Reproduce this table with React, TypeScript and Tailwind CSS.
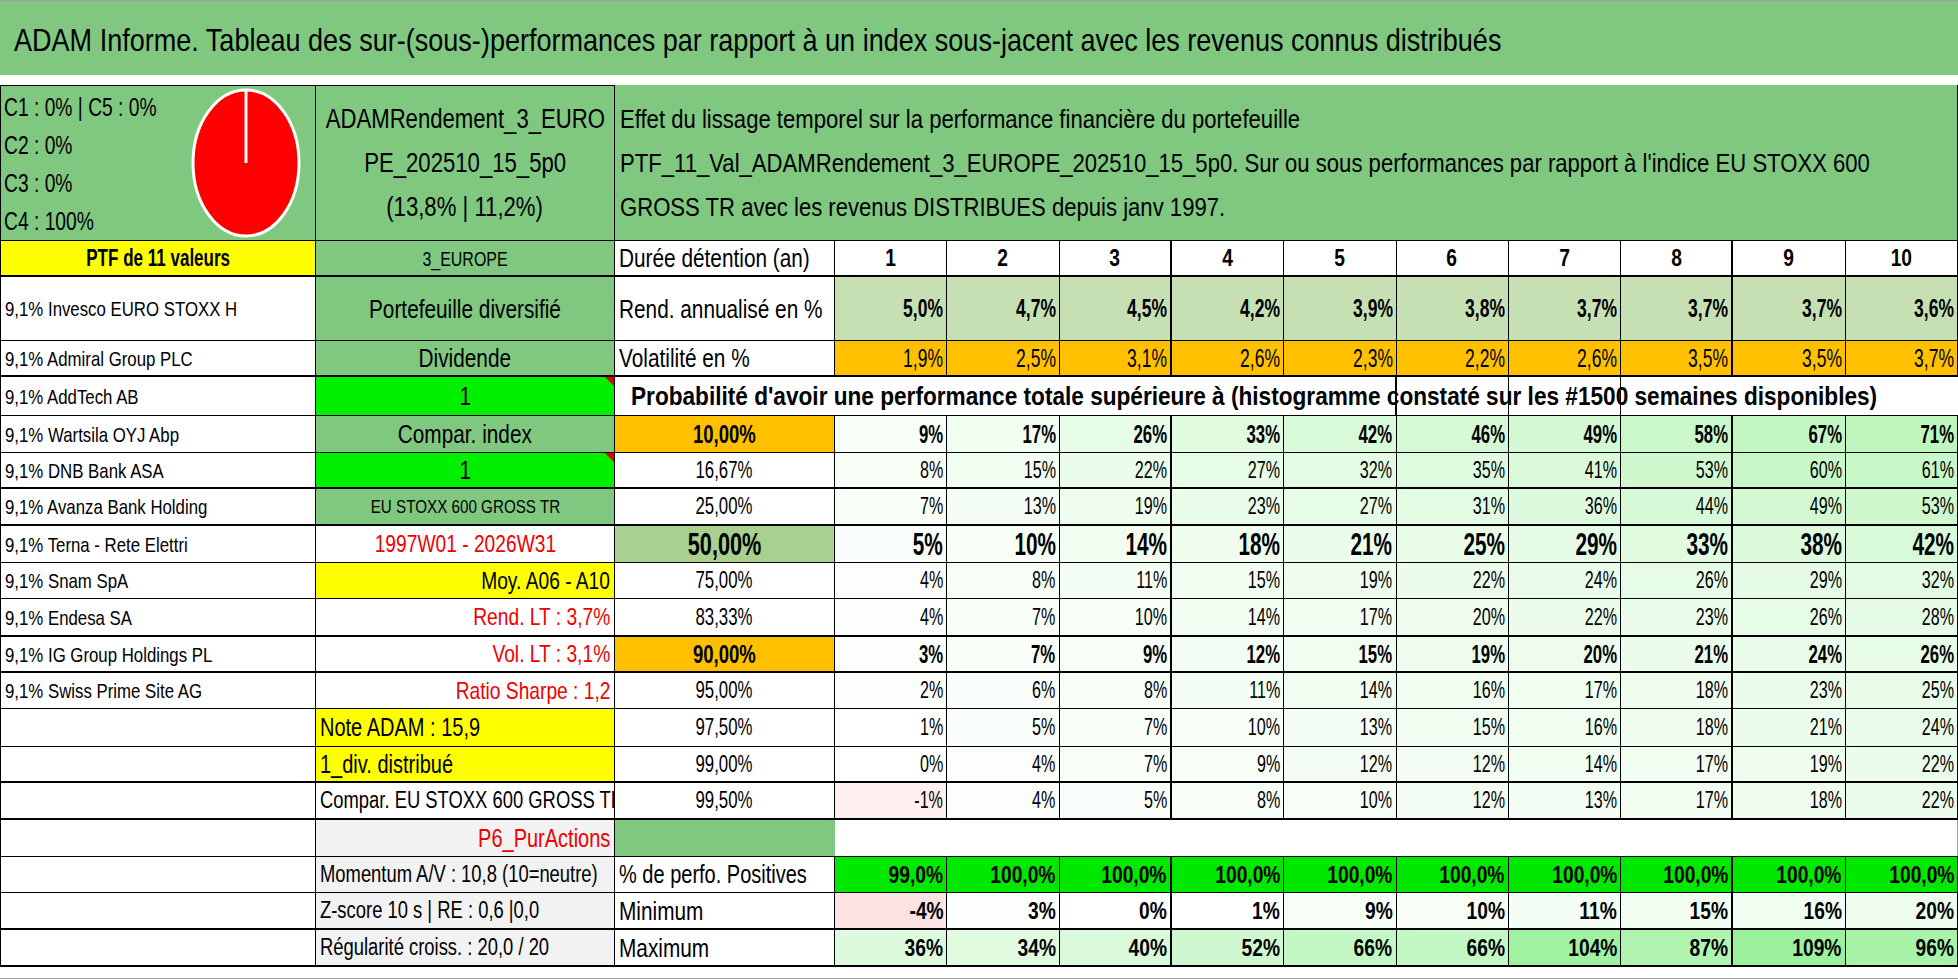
import React from 'react'

const GRID = 'grid grid-cols-[315px_299px_220px_repeat(10,minmax(0,1fr))]'

// the sheet uses a narrow, tall face; Liberation Sans squeezed horizontally stands in for it
function T({ children, o = 'origin-left', s = 'scale-x-[0.8]' }: { children: React.ReactNode; o?: string; s?: string }) {
  return <span className={`inline-block whitespace-nowrap ${s} ${o}`}>{children}</span>
}

// conditional colour scale, white -> light green, pink below zero
function scaleBg(v: number) {
  if (v < 0) return v <= -3 ? '#fde2e2' : '#fff0f0'
  const t = Math.min(v / 110, 1)
  const r = Math.round(255 - t * 100)
  const g = Math.round(255 - t * 14)
  return `rgb(${r},${g},${r})`
}

const rend = ['5,0%', '4,7%', '4,5%', '4,2%', '3,9%', '3,8%', '3,7%', '3,7%', '3,7%', '3,6%']
const vol = ['1,9%', '2,5%', '3,1%', '2,6%', '2,3%', '2,2%', '2,6%', '3,5%', '3,5%', '3,7%']

type Align = 'l' | 'c' | 'r'

type ProbRow = {
  name: string
  b: string
  bCls: string
  bAlign: Align
  p: string
  pCls: string
  pS: string
  vals: number[]
  valCls: string
  valS: string
  h: string
  bottom: string
  tri?: boolean
}

const justify = { l: 'justify-start', c: 'justify-center', r: 'justify-end' }
const origin = { l: 'origin-left', c: 'origin-center', r: 'origin-right' }

const REG = { pCls: 'text-[23px]', pS: 'scale-x-[0.73]', valCls: 'text-[23px]', valS: 'scale-x-[0.7]' }
const BOLD = { pCls: 'bg-[#ffc000] font-bold text-[25px]', pS: 'scale-x-[0.74]', valCls: 'font-bold text-[25px]', valS: 'scale-x-[0.67]' }

const probRows: ProbRow[] = [
  { name: '9,1% Wartsila OYJ Abp', b: 'Compar. index', bCls: 'bg-[#80c880] text-[26px]', bAlign: 'c', p: '10,00%', ...BOLD, vals: [9, 17, 26, 33, 42, 46, 49, 58, 67, 71], h: 'h-[37px]', bottom: 'border-b' },
  { name: '9,1% DNB Bank ASA', b: '1', bCls: 'bg-[#00f000] text-[26px]', bAlign: 'c', tri: true, p: '16,67%', ...REG, vals: [8, 15, 22, 27, 32, 35, 41, 53, 60, 61], h: 'h-[36px]', bottom: 'border-b-2' },
  { name: '9,1% Avanza Bank Holding', b: 'EU STOXX 600 GROSS TR', bCls: 'bg-[#80c880] text-[19px]', bAlign: 'c', p: '25,00%', ...REG, vals: [7, 13, 19, 23, 27, 31, 36, 44, 49, 53], h: 'h-[37px]', bottom: 'border-b-2' },
  { name: '9,1% Terna - Rete Elettri', b: '1997W01 - 2026W31', bCls: 'text-[24px] text-[#f00000]', bAlign: 'c', p: '50,00%', pCls: 'bg-[#a9d08e] font-bold text-[31px]', pS: 'scale-x-[0.7]', vals: [5, 10, 14, 18, 21, 25, 29, 33, 38, 42], valCls: 'font-bold text-[31px]', valS: 'scale-x-[0.67]', h: 'h-[37px]', bottom: 'border-b' },
  { name: '9,1% Snam SpA', b: 'Moy. A06 - A10', bCls: 'bg-[#ffff00] text-[24px]', bAlign: 'r', p: '75,00%', ...REG, vals: [4, 8, 11, 15, 19, 22, 24, 26, 29, 32], h: 'h-[36px]', bottom: 'border-b' },
  { name: '9,1% Endesa SA', b: 'Rend. LT : 3,7%', bCls: 'text-[24px] text-[#f00000]', bAlign: 'r', p: '83,33%', ...REG, vals: [4, 7, 10, 14, 17, 20, 22, 23, 26, 28], h: 'h-[38px]', bottom: 'border-b-2' },
  { name: '9,1% IG Group Holdings PL', b: 'Vol. LT : 3,1%', bCls: 'text-[24px] text-[#f00000]', bAlign: 'r', p: '90,00%', ...BOLD, vals: [3, 7, 9, 12, 15, 19, 20, 21, 24, 26], h: 'h-[36px]', bottom: 'border-b-2' },
  { name: '9,1% Swiss Prime Site AG', b: 'Ratio Sharpe : 1,2', bCls: 'text-[24px] text-[#f00000]', bAlign: 'r', p: '95,00%', ...REG, vals: [2, 6, 8, 11, 14, 16, 17, 18, 23, 25], h: 'h-[36px]', bottom: 'border-b' },
  { name: '', b: 'Note ADAM : 15,9', bCls: 'bg-[#ffff00] text-[25px]', bAlign: 'l', p: '97,50%', ...REG, vals: [1, 5, 7, 10, 13, 15, 16, 18, 21, 24], h: 'h-[38px]', bottom: 'border-b' },
  { name: '', b: '1_div. distribué', bCls: 'bg-[#ffff00] text-[25px]', bAlign: 'l', p: '99,00%', ...REG, vals: [0, 4, 7, 9, 12, 12, 14, 17, 19, 22], h: 'h-[36px]', bottom: 'border-b-2' },
  { name: '', b: 'Compar. EU STOXX 600 GROSS TR', bCls: 'text-[23px]', bAlign: 'l', p: '99,50%', ...REG, vals: [-1, 4, 5, 8, 10, 12, 13, 17, 18, 22], h: 'h-[37px]', bottom: 'border-b-2' },
]

const positives = ['99,0%', '100,0%', '100,0%', '100,0%', '100,0%', '100,0%', '100,0%', '100,0%', '100,0%', '100,0%']
const minimum = [-4, 3, 0, 1, 9, 10, 11, 15, 16, 20]
const maximum = [36, 34, 40, 52, 66, 66, 104, 87, 109, 96]

function colBorder(i: number) {
  return i === 2 || i === 7 ? 'border-r-2' : 'border-r'
}

function Tri() {
  return <span className="absolute top-0 right-0 w-0 h-0 border-t-[9px] border-l-[9px] border-t-[#e00000] border-l-transparent" />
}

function NameCell({ name }: { name: string }) {
  return (
    <div className="flex items-center border-r border-black pl-[4px] text-[21px] overflow-hidden">
      <T>{name}</T>
    </div>
  )
}

export default function App() {
  return (
    <div className="w-[1958px] h-[979px] bg-white text-black overflow-hidden leading-none font-['Liberation_Sans',Arial,sans-serif]">
      {/* title */}
      <div className="h-[75px] bg-[#80c880] border-t border-[#a0a0a0] flex items-center pl-[14px] pt-[3px] text-[32px]">
        <T s="scale-x-[0.845]">ADAM Informe. Tableau des sur-(sous-)performances par rapport à un index sous-jacent avec les revenus connus distribués</T>
      </div>
      <div className="h-[10px]" />

      <div className="border-l border-black">
        {/* header block */}
        <div className={`${GRID} h-[156px] border-b border-black`}>
          <div className="flex items-center bg-[#80c880] border-t border-r border-black">
            <div className="self-start w-[170px] shrink-0 pt-[2px] pl-[3px] text-[26px] leading-[38px]">
              <div><T s="scale-x-[0.74]">C1 : 0% | C5 : 0%</T></div>
              <div><T s="scale-x-[0.74]">C2 : 0%</T></div>
              <div><T s="scale-x-[0.74]">C3 : 0%</T></div>
              <div><T s="scale-x-[0.74]">C4 : 100%</T></div>
            </div>
            <svg className="shrink-0 ml-auto mr-[14px]" width="110" height="150" viewBox="0 0 110 150">
              <ellipse cx="55" cy="75" rx="53" ry="73" fill="#ff0000" stroke="#ffffff" strokeWidth="3" />
              <line x1="55" y1="2" x2="55" y2="75" stroke="#ffffff" strokeWidth="3" />
            </svg>
          </div>
          <div className="flex flex-col items-center justify-center bg-[#80c880] border-t border-r border-black text-[27px] leading-[44px]">
            <T o="origin-center" s="scale-x-[0.82]">ADAMRendement_3_EURO</T>
            <T o="origin-center" s="scale-x-[0.82]">PE_202510_15_5p0</T>
            <T o="origin-center" s="scale-x-[0.82]">(13,8% | 11,2%)</T>
          </div>
          <div className="col-span-11 flex flex-col justify-center bg-[#80c880] border-r border-black pl-[5px] text-[26px] leading-[44px]">
            <div><T s="scale-x-[0.85]">Effet du lissage temporel sur la performance financière du portefeuille</T></div>
            <div><T s="scale-x-[0.85]">PTF_11_Val_ADAMRendement_3_EUROPE_202510_15_5p0. Sur ou sous performances par rapport à l'indice EU STOXX 600</T></div>
            <div><T s="scale-x-[0.85]">GROSS TR avec les revenus DISTRIBUES depuis janv 1997.</T></div>
          </div>
        </div>

        {/* durée */}
        <div className={`${GRID} h-[36px] border-b-2 border-black`}>
          <div className="flex items-center justify-center bg-[#ffff00] border-r border-black font-bold text-[23px]">
            <T o="origin-center" s="scale-x-[0.74]">PTF de 11 valeurs</T>
          </div>
          <div className="flex items-center justify-center bg-[#80c880] border-r border-black text-[21px]">
            <T o="origin-center" s="scale-x-[0.76]">3_EUROPE</T>
          </div>
          <div className="flex items-center border-r border-black pl-[4px] text-[26px]">
            <T>Durée détention (an)</T>
          </div>
          {Array.from({ length: 10 }, (_, i) => (
            <div key={i} className={`flex items-center justify-center ${colBorder(i)} border-black font-bold text-[24px]`}>
              <T o="origin-center">{i + 1}</T>
            </div>
          ))}
        </div>

        {/* rendement */}
        <div className={`${GRID} h-[64px] border-b border-black`}>
          <NameCell name="9,1% Invesco EURO STOXX H" />
          <div className="flex items-center justify-center bg-[#80c880] border-r border-black text-[26px]">
            <T o="origin-center">Portefeuille diversifié</T>
          </div>
          <div className="flex items-center border-r border-black pl-[4px] text-[26px]">
            <T>Rend. annualisé en %</T>
          </div>
          {rend.map((v, i) => (
            <div key={i} className={`flex items-center justify-end pr-[3px] bg-[#c6e0b4] ${colBorder(i)} border-black font-bold text-[25px]`}>
              <T o="origin-right" s="scale-x-[0.7]">{v}</T>
            </div>
          ))}
        </div>

        {/* volatilité */}
        <div className={`${GRID} h-[36px] border-b-2 border-black`}>
          <NameCell name="9,1% Admiral Group PLC" />
          <div className="flex items-center justify-center bg-[#80c880] border-r border-black text-[26px]">
            <T o="origin-center">Dividende</T>
          </div>
          <div className="flex items-center border-r border-black pl-[4px] text-[26px]">
            <T>Volatilité en %</T>
          </div>
          {vol.map((v, i) => (
            <div key={i} className={`flex items-center justify-end pr-[3px] bg-[#ffc000] ${colBorder(i)} border-black text-[25px]`}>
              <T o="origin-right" s="scale-x-[0.7]">{v}</T>
            </div>
          ))}
        </div>

        {/* probabilité header */}
        <div className={`${GRID} h-[39px] border-b border-black`}>
          <NameCell name="9,1% AddTech AB" />
          <div className="relative flex items-center justify-center bg-[#00f000] border-r border-black text-[26px]">
            <T o="origin-center">1</T>
            <Tri />
          </div>
          <div className="col-span-6 flex items-center border-r-2 border-black pl-[16px] font-bold text-[26px]">
            <T s="scale-x-[0.87]">Probabilité d'avoir une performance totale supérieure à (histogramme constaté sur les #1500 semaines disponibles)</T>
          </div>
          <div className="border-r border-black" />
          <div className="border-r border-black" />
        </div>

        {probRows.map((r, ri) => (
          <div key={ri} className={`${GRID} ${r.h} ${r.bottom} border-black`}>
            <NameCell name={r.name} />
            <div className={`relative flex items-center ${justify[r.bAlign]} px-[4px] border-r border-black overflow-hidden ${r.bCls}`}>
              <T o={origin[r.bAlign]}>{r.b}</T>
              {r.tri && <Tri />}
            </div>
            <div className={`flex items-center justify-center border-r border-black ${r.pCls}`}>
              <T o="origin-center" s={r.pS}>{r.p}</T>
            </div>
            {r.vals.map((v, i) => (
              <div
                key={i}
                className={`flex items-center justify-end pr-[3px] ${colBorder(i)} border-black ${r.valCls}`}
                style={{ background: scaleBg(v) }}
              >
                <T o="origin-right" s={r.valS}>{v}%</T>
              </div>
            ))}
          </div>
        ))}

        {/* P6 */}
        <div className={`${GRID} h-[37px] border-b border-black`}>
          <div className="border-r border-black" />
          <div className="flex items-center justify-end px-[4px] bg-[#f2f2f2] border-r border-black text-[25px] text-[#f00000]">
            <T o="origin-right">P6_PurActions</T>
          </div>
          <div className="bg-[#80c880]" />
          <div className="col-span-10 border-r border-[#a0a0a0]" />
        </div>

        {/* positives */}
        <div className={`${GRID} h-[36px] border-b border-black`}>
          <div className="border-r border-black" />
          <div className="flex items-center px-[4px] bg-[#f2f2f2] border-r border-black text-[23px]">
            <T>Momentum A/V : 10,8 (10=neutre)</T>
          </div>
          <div className="flex items-center pl-[4px] border-r border-black text-[25px]">
            <T>% de perfo. Positives</T>
          </div>
          {positives.map((v, i) => (
            <div key={i} className={`flex items-center justify-end pr-[3px] bg-[#00e800] ${colBorder(i)} border-black font-bold text-[24px]`}>
              <T o="origin-right">{v}</T>
            </div>
          ))}
        </div>

        {/* minimum */}
        <div className={`${GRID} h-[37px] border-b-2 border-black`}>
          <div className="border-r border-black" />
          <div className="flex items-center px-[4px] bg-[#f2f2f2] border-r border-black text-[23px]">
            <T>Z-score 10 s | RE : 0,6 |0,0</T>
          </div>
          <div className="flex items-center pl-[4px] border-r border-black text-[26px]">
            <T>Minimum</T>
          </div>
          {minimum.map((v, i) => (
            <div
              key={i}
              className={`flex items-center justify-end pr-[3px] ${colBorder(i)} border-black font-bold text-[24px]`}
              style={{ background: scaleBg(v) }}
            >
              <T o="origin-right">{v}%</T>
            </div>
          ))}
        </div>

        {/* maximum */}
        <div className={`${GRID} h-[37px] border-b-2 border-black`}>
          <div className="border-r border-black" />
          <div className="flex items-center px-[4px] bg-[#f2f2f2] border-r border-black text-[23px]">
            <T>Régularité croiss. : 20,0 / 20</T>
          </div>
          <div className="flex items-center pl-[4px] border-r border-black text-[26px]">
            <T>Maximum</T>
          </div>
          {maximum.map((v, i) => (
            <div
              key={i}
              className={`flex items-center justify-end pr-[3px] ${colBorder(i)} border-black font-bold text-[24px]`}
              style={{ background: scaleBg(v) }}
            >
              <T o="origin-right">{v}%</T>
            </div>
          ))}
        </div>
      </div>

      <div className="h-[11px]" />
      <div className="h-px bg-[#a0a0a0]" />
    </div>
  )
}
